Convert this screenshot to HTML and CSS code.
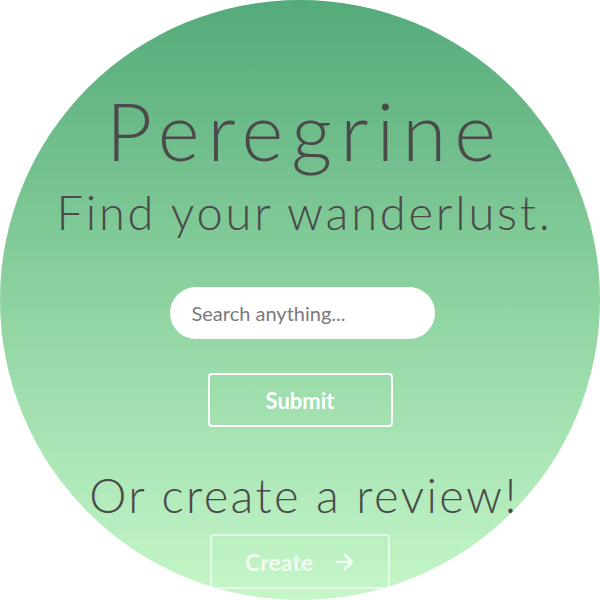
FILE: index.html
```html
<!DOCTYPE html>
<html>
<head>
<meta charset="utf-8">
<link rel="stylesheet" href="styles.css">
</head>
<body>
<main class="circle">
  <h1 class="title">Peregrine</h1>
  <h2 class="tagline">Find your wanderlust.</h2>
  <form class="search">
    <input class="search-input" type="text" placeholder="Search anything...">
    <button class="btn btn-submit" type="button">Submit</button>
  </form>
  <h2 class="tagline tagline-review">Or create a review!</h2>
  <button class="btn btn-create" type="button">Create <svg class="arrow" width="20" height="18" viewBox="0 0 20 18"><path d="M2 9 H17 M10 2 L17 9 L10 16" fill="none" stroke="currentColor" stroke-width="2.6" stroke-linecap="round" stroke-linejoin="round"/></svg></button>
</main>
</body>
</html>
```
FILE: styles.css
```css
html, body {
  margin: 0;
  padding: 0;
  background: #ffffff;
}
.circle {
  width: 600px;
  height: 600px;
  border-radius: 50%;
  overflow: hidden;
  background: linear-gradient(180deg, #54aa79 0%, #8dd3a0 50%, #c6f7c9 100%);
  display: flex;
  flex-direction: column;
  align-items: center;
  font-family: "Lato", "Liberation Sans", sans-serif;
  color: #4a4a4a;
}
.title {
  margin: 90px 0 0;
  padding-left: 10px;
  font-size: 80px;
  font-weight: 300;
  line-height: 1;
  letter-spacing: 8px;
}
.tagline {
  margin: 19px 0 0;
  padding-left: 9px;
  font-size: 47px;
  font-weight: 300;
  line-height: 1;
  letter-spacing: 2.8px;
}
.search {
  display: flex;
  flex-direction: column;
  align-items: center;
  margin-top: 51px;
  gap: 34px;
}
.search-input {
  box-sizing: border-box;
  width: 265px;
  height: 52px;
  margin-left: 4px;
  border: none;
  border-radius: 26px;
  padding: 0 22px;
  background: #ffffff;
  font-family: "Lato", "Liberation Sans", sans-serif;
  font-size: 20px;
  color: #4a4a4a;
  outline: none;
}
.search-input::placeholder {
  color: #7a7a7a;
}
.btn {
  box-sizing: border-box;
  background: transparent;
  border: 2px solid #ffffff;
  border-radius: 4px;
  color: #ffffff;
  font-family: "Lato", "Liberation Sans", sans-serif;
  font-weight: 700;
  font-size: 22px;
  display: flex;
  align-items: center;
  justify-content: center;
  padding: 0;
}
.btn-submit {
  width: 185px;
  height: 54px;
}
.tagline-review {
  margin-top: 45px;
  padding-left: 8px;
  letter-spacing: 2.4px;
}
.btn-create {
  margin-top: 15px;
  width: 180px;
  height: 55px;
  border-color: rgba(255, 255, 255, 0.6);
  color: rgba(255, 255, 255, 0.78);
  font-size: 23px;
  gap: 22px;
}
.arrow {
  display: block;
}
```
